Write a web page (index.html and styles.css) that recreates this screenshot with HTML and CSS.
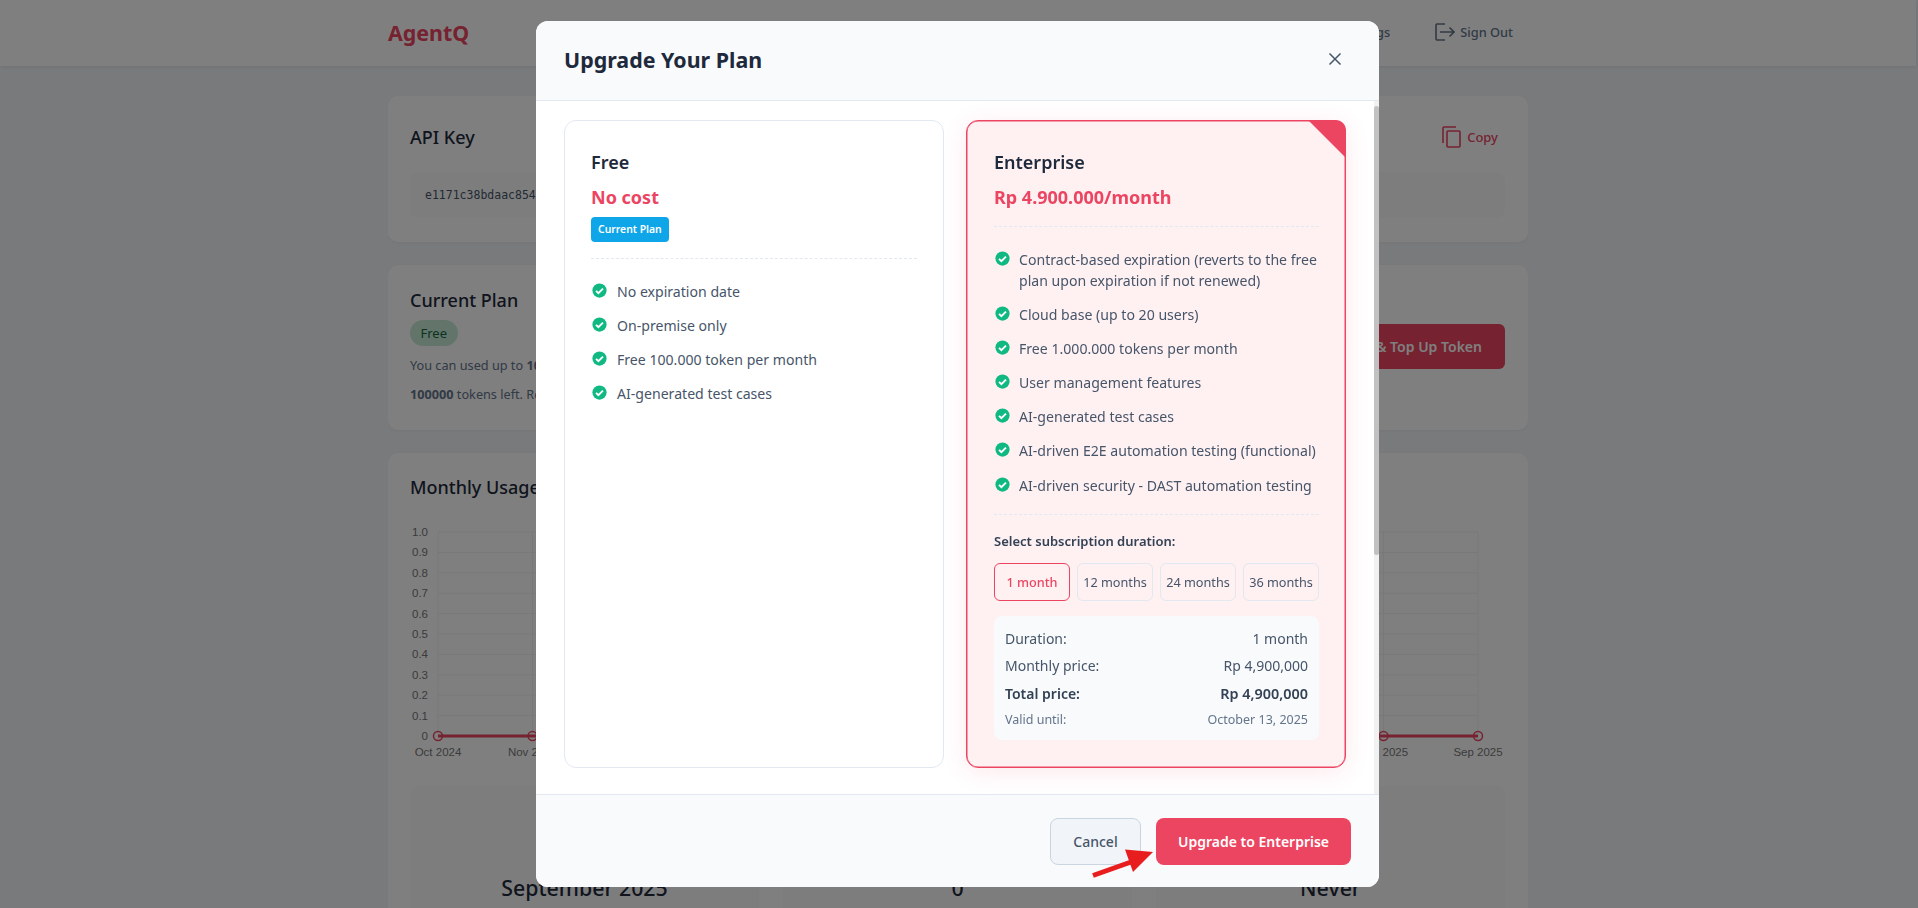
FILE: index.html
```html
<!DOCTYPE html>
<html lang="en">
<head>
  <meta charset="UTF-8">
  <meta name="viewport" content="width=device-width, initial-scale=1">
  <title>AgentQ - Upgrade Your Plan</title>
  <link rel="stylesheet" href="styles.css">
</head>
<body>

  <svg class="defs" width="0" height="0">
    <symbol id="tick" viewBox="0 0 16 16">
      <circle cx="8" cy="8" r="7.6" fill="#10b981"/>
      <path d="M4.3 8.4l2.5 2.5 4.9-5" fill="none" stroke="#fff" stroke-width="2"/>
    </symbol>
  </svg>

  <!-- PAGE BEHIND THE MODAL -->
  <header class="navbar">
    <div class="nav-inner">
      <a class="logo">AgentQ</a>
      <nav class="nav-links">
        <a class="nav-link">Settings</a>
        <a class="nav-link">
          <svg width="20" height="18" viewBox="0 0 20 18" fill="none" stroke="currentColor" stroke-width="1.6">
            <path d="M10 1H2a1 1 0 0 0-1 1v14a1 1 0 0 0 1 1h8"/>
            <path d="M5 9h14M14.500 4.500L19 9l-4.500 4.500"/>
          </svg>
          Sign Out
        </a>
      </nav>
    </div>
  </header>

  <main class="page">
    <section class="card">
      <div class="card-head">
        <h3>API Key</h3>
        <a class="copy-link">
          <svg width="19" height="22" viewBox="0 0 19 22" fill="none" stroke="currentColor" stroke-width="1.6">
            <path d="M1 17V2a1 1 0 0 1 1-1h12"/>
            <rect x="5" y="5" width="13" height="16" rx="1"/>
          </svg>
          Copy
        </a>
      </div>
      <div class="key-box">e1171c38bdaac854</div>
    </section>

    <section class="card plan-card">
      <div>
        <h3>Current Plan</h3>
        <span class="plan-badge">Free</span>
        <p class="plan-text">You can used up to <b>100000</b></p>
        <p class="plan-text"><b>100000</b> tokens left. Resets</p>
      </div>
      <button class="topup-btn">Upgrade &amp; Top Up Token</button>
    </section>

    <section class="card usage-card">
      <h3>Monthly Usage</h3>
      <svg class="chart" width="1095" height="248" viewBox="0 0 1095 248">
        <g class="grid">
          <path d="M28 8H1068M28 28.400H1068M28 48.800H1068M28 69.200H1068M28 89.600H1068M28 110H1068M28 130.400H1068M28 150.800H1068M28 171.200H1068M28 191.600H1068"/>
          <path d="M28 8V212M122.500 8V212M217 8V212M311.600 8V212M406.200 8V212M500.700 8V212M595.300 8V212M689.800 8V212M784.400 8V212M879 8V212M973.500 8V212M1068 8V212"/>
        </g>
        <g class="y-labels">
          <text x="18" y="12">1.0</text>
          <text x="18" y="32">0.9</text>
          <text x="18" y="53">0.8</text>
          <text x="18" y="73">0.7</text>
          <text x="18" y="94">0.6</text>
          <text x="18" y="114">0.5</text>
          <text x="18" y="134">0.4</text>
          <text x="18" y="155">0.3</text>
          <text x="18" y="175">0.2</text>
          <text x="18" y="196">0.1</text>
          <text x="18" y="216">0</text>
        </g>
        <g class="x-labels">
          <text x="28" y="232">Oct 2024</text>
          <text x="122.500" y="232">Nov 2024</text>
          <text x="217" y="232">Dec 2024</text>
          <text x="311.600" y="232">Jan 2025</text>
          <text x="406.200" y="232">Feb 2025</text>
          <text x="500.700" y="232">Mar 2025</text>
          <text x="595.300" y="232">Apr 2025</text>
          <text x="689.800" y="232">May 2025</text>
          <text x="784.400" y="232">Jun 2025</text>
          <text x="879" y="232">Jul 2025</text>
          <text x="973.500" y="232">Aug 2025</text>
          <text x="1068" y="232">Sep 2025</text>
        </g>
        <path class="line" d="M28 212H1068"/>
        <g class="dots">
          <circle cx="28" cy="212" r="4.500"/>
          <circle cx="122.500" cy="212" r="4.500"/>
          <circle cx="973.500" cy="212" r="4.500"/>
          <circle cx="1068" cy="212" r="4.500"/>
        </g>
      </svg>
      <div class="stats">
        <div class="stat">September 2025</div>
        <div class="stat">0</div>
        <div class="stat">Never</div>
      </div>
    </section>
  </main>

  <!-- UPGRADE MODAL -->
  <div class="overlay">
    <div class="modal">
      <div class="modal-header">
        <h2>Upgrade Your Plan</h2>
        <button class="close-btn">
          <svg width="14" height="14" viewBox="0 0 14 14" fill="none" stroke="currentColor" stroke-width="1.5">
            <path d="M1.500 1.500l11 11M12.500 1.500l-11 11"/>
          </svg>
        </button>
      </div>

      <div class="modal-body">
        <div class="plans">
          <div class="plan">
            <h3 class="plan-name">Free</h3>
            <div class="plan-price">No cost</div>
            <span class="current-tag">Current Plan</span>
            <ul class="features free-features">
              <li><svg class="tick"><use href="#tick"/></svg>No expiration date</li>
              <li><svg class="tick"><use href="#tick"/></svg>On-premise only</li>
              <li><svg class="tick"><use href="#tick"/></svg>Free 100.000 token per month</li>
              <li><svg class="tick"><use href="#tick"/></svg>AI-generated test cases</li>
            </ul>
          </div>

          <div class="plan plan-selected">
            <h3 class="plan-name">Enterprise</h3>
            <div class="plan-price">Rp 4.900.000/month</div>
            <ul class="features">
              <li><svg class="tick"><use href="#tick"/></svg>Contract-based expiration (reverts to the free plan upon expiration if not renewed)</li>
              <li><svg class="tick"><use href="#tick"/></svg>Cloud base (up to 20 users)</li>
              <li><svg class="tick"><use href="#tick"/></svg>Free 1.000.000 tokens per month</li>
              <li><svg class="tick"><use href="#tick"/></svg>User management features</li>
              <li><svg class="tick"><use href="#tick"/></svg>AI-generated test cases</li>
              <li><svg class="tick"><use href="#tick"/></svg>AI-driven E2E automation testing (functional)</li>
              <li><svg class="tick"><use href="#tick"/></svg>AI-driven security - DAST automation testing</li>
            </ul>
            <div class="duration">
              <div class="duration-label">Select subscription duration:</div>
              <div class="duration-opts">
                <button class="opt active">1 month</button>
                <button class="opt">12 months</button>
                <button class="opt">24 months</button>
                <button class="opt">36 months</button>
              </div>
            </div>
            <div class="summary">
              <div class="summary-row"><span>Duration:</span><span>1 month</span></div>
              <div class="summary-row"><span>Monthly price:</span><span>Rp 4,900,000</span></div>
              <div class="summary-row total"><span>Total price:</span><span class="total-value">Rp 4,900,000</span></div>
              <div class="summary-row valid"><span>Valid until:</span><span>October 13, 2025</span></div>
            </div>
          </div>
        </div>
        <div class="scroll-track"><div class="scroll-thumb"></div></div>
      </div>

      <div class="modal-footer">
        <button class="btn-cancel">Cancel</button>
        <button class="btn-upgrade">Upgrade to Enterprise</button>
      </div>
    </div>
  </div>

  <!-- red arrow annotation on the screenshot -->
  <svg class="arrow" width="66" height="30" viewBox="0 0 66 30">
    <path d="M2 26.500L40 13" stroke="#e81e1e" stroke-width="5" fill="none"/>
    <path d="M62 3L34 0.500 42 23z" fill="#e81e1e"/>
  </svg>

</body>
</html>
```

FILE: styles.css
```css
* {
  margin: 0;
  padding: 0;
  box-sizing: border-box;
  font-family: 'Noto Sans', sans-serif;
}
html, body {
  height: 100%;
  overflow: hidden;
}
body {
  background: #f2f4f8;
  color: #1e293b;
  padding-right: 2px;
}
button {
  border: none;
  background: none;
  cursor: pointer;
}
.defs {
  position: absolute;
}

/* ===== NAVBAR ===== */
.navbar {
  height: 66px;
  background: #fff;
  box-shadow: 0 1px 3px rgba(0,0,0,0.08);
}
.nav-inner {
  width: 1140px;
  height: 100%;
  margin: 0 auto;
  padding: 0 15px 2px 0;
  display: flex;
  align-items: center;
  justify-content: space-between;
}
.logo {
  font-size: 21.400px;
  font-weight: 700;
  color: #ec4562;
}
.nav-links {
  display: flex;
  align-items: center;
  gap: 45px;
}
.nav-link {
  display: flex;
  align-items: center;
  gap: 5px;
  font-size: 12.800px;
  font-weight: 500;
  color: #64748b;
}

/* ===== PAGE CARDS ===== */
.page {
  width: 1140px;
  height: 812px;
  overflow: hidden;
  margin: 30px auto 0;
  display: flex;
  flex-direction: column;
  gap: 23px;
}
.card {
  flex: none;
  background: #fff;
  border-radius: 10px;
  padding: 28px 23px 24px 22px;
  box-shadow: 0 1px 3px rgba(0,0,0,0.04);
}
.card h3 {
  font-size: 18px;
  font-weight: 500;
  line-height: 26px;
  color: #1e293b;
}
.card-head {
  display: flex;
  align-items: center;
  justify-content: space-between;
  padding-right: 7px;
}
.copy-link {
  display: flex;
  align-items: center;
  gap: 6px;
  font-size: 13px;
  font-weight: 500;
  color: #ec4562;
}
.key-box {
  height: 46px;
  margin-top: 22px;
  padding: 0 15px;
  border-radius: 8px;
  background: #fafbfa;
  font-family: 'DejaVu Sans Mono', monospace;
  font-size: 11.500px;
  line-height: 46px;
  color: #475569;
}
.plan-card {
  height: 165px;
  padding-top: 20px;
  display: flex;
  align-items: center;
  justify-content: space-between;
}
.plan-badge {
  display: inline-block;
  margin-top: 7px;
  padding: 0 10.500px;
  height: 26px;
  line-height: 26px;
  border-radius: 13px;
  background: #c6e9d6;
  font-size: 13px;
  color: #14683f;
}
.plan-text {
  margin-top: 7px;
  font-size: 12.700px;
  line-height: 22px;
  color: #64748b;
}
.plan-badge + .plan-text {
  margin-top: 8px;
}
.topup-btn {
  height: 45px;
  margin-top: 2px;
  padding: 0 23px;
  border-radius: 6px;
  background: #ec4562;
  color: #fff;
  font-size: 14px;
  font-weight: 600;
}
.usage-card {
  padding-top: 21px;
  height: 600px;
}
.chart {
  display: block;
  margin-top: 24px;
}
.grid path {
  fill: none;
  stroke: #f2f2f2;
  stroke-width: 1;
}
.chart text {
  font-family: 'Liberation Sans', sans-serif;
  font-size: 11.500px;
  fill: #777;
}
.y-labels text {
  text-anchor: end;
}
.x-labels text {
  text-anchor: middle;
}
.line {
  fill: none;
  stroke: #ec4562;
  stroke-width: 3;
}
.dots circle {
  fill: none;
  stroke: #ec4562;
  stroke-width: 1.500;
}
.stats {
  display: grid;
  grid-template-columns: repeat(3, 1fr);
  gap: 24px;
  margin-top: 14px;
}
.stat {
  height: 160px;
  padding-top: 86px;
  border-radius: 8px;
  background: #fafbfa;
  text-align: center;
  font-size: 21.300px;
  font-weight: 500;
  line-height: 32px;
  color: #1e293b;
}

/* ===== MODAL ===== */
.overlay {
  position: fixed;
  inset: 0;
  padding-right: 3px;
  background: rgba(0,0,0,0.5);
  display: flex;
  align-items: center;
  justify-content: center;
}
.modal {
  width: 843px;
  height: 866px;
  background: #fff;
  border-radius: 12px;
  overflow: hidden;
  display: flex;
  flex-direction: column;
}
.modal-header {
  height: 80px;
  flex: none;
  padding: 0 28px 3px;
  background: #f8fafc;
  border-bottom: 1px solid #e2e8f0;
  display: flex;
  align-items: center;
  justify-content: space-between;
}
.modal-header h2 {
  font-size: 21.400px;
  font-weight: 700;
  color: #1e293b;
}
.close-btn {
  display: flex;
  margin-right: 9px;
  color: #475569;
}
.modal-body {
  position: relative;
  flex: 1;
  padding: 19px 33px 0 28px;
}
.scroll-track {
  position: absolute;
  top: 0;
  right: 0;
  bottom: 0;
  width: 5px;
  background: #f1f1f1;
}
.scroll-thumb {
  height: 449px;
  margin-top: 5px;
  border-radius: 3px;
  background: #c1c1c1;
}
.plans {
  display: grid;
  grid-template-columns: 380px 380px;
  gap: 22px;
}
.plan {
  height: 648px;
  border: 1px solid #e2e8f0;
  border-radius: 12px;
  padding: 26px 26px 0;
  background: #fff;
}
.plan-selected {
  position: relative;
  border: 1px solid #ec4562;
  padding: 26px 26px 0 27px;
  background: #fff1f2;
  box-shadow: inset 0 0 0 0.5px #ec4562, 0 4px 24px rgba(236,69,98,0.12);
}
.plan-selected::before {
  content: '';
  position: absolute;
  top: -1px;
  right: -1px;
  border-style: solid;
  border-width: 0 38px 38px 0;
  border-color: transparent #ec4562 transparent transparent;
  border-top-right-radius: 10px;
}
.plan-name {
  font-size: 18px;
  font-weight: 600;
  line-height: 30px;
  color: #1e293b;
}
.plan-price {
  margin-top: 6px;
  font-size: 18px;
  font-weight: 700;
  line-height: 28px;
  color: #ec4562;
}
.current-tag {
  display: inline-block;
  margin-top: 6px;
  padding: 0 7px;
  height: 25px;
  line-height: 25px;
  border-radius: 4px;
  background: #0ea5e9;
  color: #fff;
  font-size: 10.400px;
  font-weight: 600;
}
.features {
  list-style: none;
  margin-top: 15px;
  padding-top: 22px;
  border-top: 1px dashed #e2e8f0;
  display: flex;
  flex-direction: column;
  gap: 13.100px;
}
.free-features {
  margin-top: 16px;
  padding-top: 22px;
}
.features li {
  position: relative;
  padding-left: 25px;
  font-size: 14.100px;
  line-height: 21px;
  color: #475569;
}
.free-features li {
  padding-left: 26px;
}
.tick {
  position: absolute;
  left: 1px;
  top: 2px;
  width: 15px;
  height: 15px;
}
.duration {
  margin-top: 18px;
  padding-top: 16px;
  border-top: 1px dashed #e2e8f0;
}
.duration-label {
  font-size: 13px;
  font-weight: 600;
  line-height: 20px;
  color: #334155;
}
.duration-opts {
  display: flex;
  gap: 7px;
  margin-top: 12px;
}
.opt {
  flex: 1;
  height: 38px;
  border: 1px solid #e2e8f0;
  border-radius: 6px;
  font-size: 12.700px;
  color: #475569;
}
.opt.active {
  border-color: #ec4562;
  color: #ec4562;
  font-weight: 500;
}
.summary {
  margin-top: 15px;
  padding: 9px 11px 8px;
  border-radius: 8px;
  background: #f8fafc;
}
.summary-row {
  display: flex;
  justify-content: space-between;
  font-size: 14px;
  line-height: 27.500px;
  color: #475569;
}
.summary-row.total {
  font-weight: 600;
  color: #334155;
}
.total-value {
  font-size: 14.400px;
}
.summary-row.valid {
  font-size: 12.500px;
  line-height: 25px;
  color: #64748b;
}
.modal-footer {
  height: 93px;
  flex: none;
  padding: 23px 28px 0;
  background: #f8fafc;
  border-top: 1px solid #e2e8f0;
  display: flex;
  justify-content: flex-end;
  gap: 15px;
}
.modal-footer button {
  height: 47px;
  border-radius: 8px;
  font-size: 14px;
}
.btn-cancel {
  width: 91px;
  background: #f1f5f9;
  border: 1px solid #cbd5e1;
  color: #475569;
  font-weight: 500;
}
.btn-upgrade {
  width: 195px;
  background: #ec4562;
  color: #fff;
  font-weight: 600;
}

/* ===== ANNOTATION ===== */
.arrow {
  position: fixed;
  left: 1091px;
  top: 849px;
}
```
